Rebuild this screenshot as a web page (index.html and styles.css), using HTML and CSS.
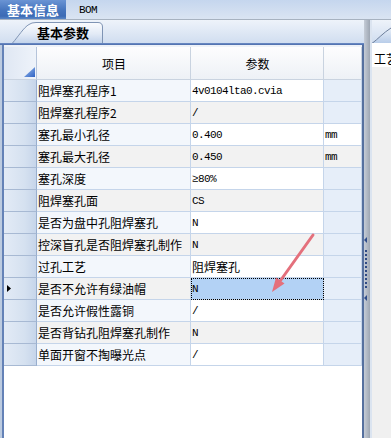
FILE: index.html
```html
<!DOCTYPE html>
<html lang="zh-CN">
<head>
<meta charset="utf-8">
<title>基本信息</title>
<link rel="stylesheet" href="styles.css">
</head>
<body>
<div class="app">
  <div class="topbar">
    <div class="maintab">基本信息</div>
    <div class="subtab">BOM</div>
  </div>
  <div class="divider"></div>
  <div class="workspace">
    <div class="leftpane">
      <div class="tabstrip">
        <div class="ptab">
          <svg class="tabshape" width="92" height="21" viewBox="0 0 92 21">
            <defs>
              <linearGradient id="tg" x1="0" y1="0" x2="0" y2="1">
                <stop offset="0" stop-color="#fbfcfe"/>
                <stop offset="0.55" stop-color="#e3ebf6"/>
                <stop offset="1" stop-color="#c2d3eb"/>
              </linearGradient>
            </defs>
            <path d="M0.5 21 C6 15 12 5 17 2.5 Q19.5 0.5 24 0.5 L86 0.5 Q90.5 0.5 90.5 5 L90.5 21" fill="url(#tg)" stroke="#7f94b4" stroke-width="1"/>
          </svg>
          <span>基本参数</span>
        </div>
      </div>
      <div class="bluebar"></div>
      <div class="panelbody">
        <div class="gap"></div>
        <div class="grid">
          <div class="row head">
            <div class="c ind"><svg width="11" height="10" viewBox="0 0 11 10"><defs><linearGradient id="hg" x1="0" y1="0" x2="1" y2="1"><stop offset="0" stop-color="#9cc0ee"/><stop offset="1" stop-color="#2f62c4"/></linearGradient></defs><polygon points="11,0 11,10 0,10" fill="url(#hg)"/></svg></div>
            <div class="c item">项目</div>
            <div class="c val">参数</div>
            <div class="c unit"></div>
          </div>
          <div class="row odd">
            <div class="c ind"></div>
            <div class="c item">阻焊塞孔程序1</div>
            <div class="c val mono">4v0104lta0.cvia</div>
            <div class="c unit blue"></div>
          </div>
          <div class="row even">
            <div class="c ind"></div>
            <div class="c item">阻焊塞孔程序2</div>
            <div class="c val mono">/</div>
            <div class="c unit blue"></div>
          </div>
          <div class="row odd">
            <div class="c ind"></div>
            <div class="c item">塞孔最小孔径</div>
            <div class="c val mono">0.400</div>
            <div class="c unit mono">mm</div>
          </div>
          <div class="row even">
            <div class="c ind"></div>
            <div class="c item">塞孔最大孔径</div>
            <div class="c val mono">0.450</div>
            <div class="c unit mono">mm</div>
          </div>
          <div class="row odd">
            <div class="c ind"></div>
            <div class="c item">塞孔深度</div>
            <div class="c val mono">≥80%</div>
            <div class="c unit blue"></div>
          </div>
          <div class="row even">
            <div class="c ind"></div>
            <div class="c item">阻焊塞孔面</div>
            <div class="c val mono">CS</div>
            <div class="c unit blue"></div>
          </div>
          <div class="row odd">
            <div class="c ind"></div>
            <div class="c item">是否为盘中孔阻焊塞孔</div>
            <div class="c val mono">N</div>
            <div class="c unit blue"></div>
          </div>
          <div class="row even">
            <div class="c ind"></div>
            <div class="c item">控深盲孔是否阻焊塞孔制作</div>
            <div class="c val mono">N</div>
            <div class="c unit blue"></div>
          </div>
          <div class="row odd">
            <div class="c ind"></div>
            <div class="c item">过孔工艺</div>
            <div class="c val cjk">阻焊塞孔</div>
            <div class="c unit blue"></div>
          </div>
          <div class="row even">
            <div class="c ind cur"><svg width="4" height="7" viewBox="0 0 4 7"><polygon points="0,0 4,3.5 0,7" fill="#000"/></svg></div>
            <div class="c item">是否不允许有绿油帽</div>
            <div class="c val mono sel">N</div>
            <div class="c unit blue"></div>
          </div>
          <div class="row odd">
            <div class="c ind"></div>
            <div class="c item">是否允许假性露铜</div>
            <div class="c val mono">/</div>
            <div class="c unit blue"></div>
          </div>
          <div class="row even">
            <div class="c ind"></div>
            <div class="c item">是否背钻孔阻焊塞孔制作</div>
            <div class="c val mono">N</div>
            <div class="c unit blue"></div>
          </div>
          <div class="row odd">
            <div class="c ind"></div>
            <div class="c item">单面开窗不掏曝光点</div>
            <div class="c val mono">/</div>
            <div class="c unit blue"></div>
          </div>
        </div>
      </div>
    </div>
    <div class="splitter">
      <div class="sp-tri first"></div>
      <div class="sp-dots"></div>
      <div class="sp-tri second"></div>
    </div>
    <div class="rightpane">
      <div class="rtabstrip">
        <svg width="19" height="23" viewBox="0 0 19 23">
          <defs>
            <linearGradient id="rg" x1="0" y1="0" x2="0" y2="1">
              <stop offset="0" stop-color="#e9f0f9"/>
              <stop offset="1" stop-color="#b9cde9"/>
            </linearGradient>
          </defs>
          <path d="M0.5 23 C6 19 11 13 19 8 L19 23 Z" fill="url(#rg)"/>
          <path d="M0.5 23 C6 19 11 13 19 8" fill="none" stroke="#6d7f9c" stroke-width="1"/>
        </svg>
      </div>
      <div class="rhead">工艺</div>
    </div>
  </div>
  <svg class="arrow" width="391" height="438" viewBox="0 0 391 438">
    <line x1="313" y1="235" x2="280.5" y2="280.5" stroke="#e4707c" stroke-width="3" stroke-linecap="round"/>
    <polygon points="272,292 276,277.5 284.5,283.5" fill="#e4707c"/>
  </svg>
</div>
</body>
</html>
```
FILE: styles.css
```css
* { box-sizing: border-box; margin: 0; padding: 0; }
html, body { width: 391px; height: 438px; overflow: hidden; }
body {
  font-family: "Noto Sans CJK SC", "Noto Sans", sans-serif;
  font-size: 12px;
  color: #000;
  background: #f0f0f0;
}
.app {
  position: relative;
  width: 391px;
  height: 438px;
  display: flex;
  flex-direction: column;
}
.topbar {
  height: 19px;
  display: flex;
  align-items: stretch;
  background: linear-gradient(#c5d6ee, #dae4f2);
}
.maintab {
  width: 66px;
  display: flex;
  align-items: center;
  justify-content: center;
  color: #fff;
  font-weight: bold;
  font-size: 13px;
  line-height: 1;
  background: linear-gradient(#6a94d4, #4574bd 55%, #3c6bb5 85%, #5a86c6);
}
.subtab {
  padding-left: 13px;
  display: flex;
  align-items: center;
  font-family: "Liberation Mono", monospace;
  font-size: 11px;
  letter-spacing: -0.6px;
}
.divider { height: 1px; background: #a7b2c0; }
.workspace { flex: 1; display: flex; min-height: 0; }
.leftpane { width: 364px; flex: none; display: flex; flex-direction: column; }
.tabstrip {
  height: 23px;
  background: linear-gradient(#eef3fa, #d1def0);
  display: flex;
  align-items: flex-end;
}
.ptab {
  position: relative;
  width: 92px;
  height: 21px;
  margin-left: 12px;
  display: flex;
  align-items: center;
  padding-left: 25px;
  font-weight: bold;
  font-size: 13px;
  line-height: 1;
}
.tabshape { position: absolute; left: 0; top: 0; }
.ptab span { position: relative; }
.bluebar { height: 2px; background: linear-gradient(#6f8fc7, #4b6cab); }
.panelbody {
  flex: 1;
  display: flex;
  flex-direction: column;
  margin-left: 2px;
  border-left: 2px solid #6482b7;
  border-right: 2px solid #55709f;
  box-shadow: -2px 0 0 #bccbe0;
  background: #fff;
}
.gap { height: 2px; background: #eef2f8; }
.grid { display: flex; flex-direction: column; }
.row {
  display: grid;
  grid-template-columns: 33px 154px 133px 38px;
  height: 22px;
}
.row.head { height: 33px; }
.c {
  border-bottom: 1px solid #c5d5ea;
  border-right: 1px solid #c5d5ea;
  display: flex;
  align-items: center;
  white-space: nowrap;
  overflow: hidden;
  padding-left: 1px;
}
.head .c {
  justify-content: center;
  background: linear-gradient(#fdfdfe, #edf1f6);
  border-color: #c9d3e0;
}
.head .c.ind {
  justify-content: flex-end;
  align-items: flex-end;
  padding: 0 1px 2px 0;
  background: linear-gradient(to right, #dfe7f3, #eef3fa);
  border-right-color: #b5c4da;
}
.ind {
  background: linear-gradient(to right, #e3ebf6, #d5e1f0 65%, #c6d5ea);
  border-right-color: #98aecd;
  border-bottom-color: #a7b9d3;
}
.ind.cur { padding-left: 3px; }
.odd .item { background: #f3f7fc; }
.even .item { background: #f2f2f2; }
.odd .val, .odd .unit { background: #fff; }
.even .val, .even .unit { background: #f2f2f2; }
.row .unit.blue { background: #e6eef9; }
.mono {
  font-family: "Liberation Mono", monospace;
  font-size: 11px;
  letter-spacing: -0.6px;
}
.row .sel {
  background: #b3d2f5;
  outline: 1px dotted #000;
  outline-offset: -1px;
}
.splitter {
  width: 8px;
  flex: none;
  display: flex;
  flex-direction: column;
  background: linear-gradient(to right, #c5ccd6, #9da6b3 6px, #dbe4f0 6px);
}
.sp-tri {
  width: 0;
  height: 0;
  border-top: 3.5px solid transparent;
  border-bottom: 3.5px solid transparent;
  border-right: 3px solid #2e4c8a;
}
.sp-tri.first { margin-top: 217px; }
.sp-tri.second { margin-top: 5px; }
.sp-dots {
  width: 2px;
  height: 40px;
  margin: 7px 0 0 1px;
  background: repeating-linear-gradient(#2e4a85 0 2px, transparent 2px 4px);
}
.rightpane {
  flex: 1;
  min-width: 0;
  overflow: hidden;
  display: flex;
  flex-direction: column;
  background: #f0f0f0;
}
.rtabstrip {
  height: 23px;
  background: linear-gradient(#eef3fa, #d1def0);
  border-bottom: 1px solid #9fb0c8;
  display: flex;
}
.rhead {
  height: 24px;
  background: #fff;
  padding: 9px 0 0 2px;
  line-height: 14px;
  white-space: nowrap;
  overflow: hidden;
}
.arrow { position: absolute; left: 0; top: 0; pointer-events: none; }
```
